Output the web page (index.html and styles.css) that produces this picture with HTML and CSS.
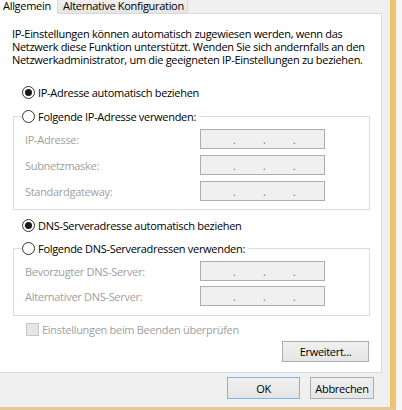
FILE: index.html
```html
<!DOCTYPE html>
<html lang="de">
<head>
<meta charset="utf-8">
<title>Eigenschaften von Internetprotokoll, Version 4 (TCP/IPv4)</title>
<link rel="stylesheet" href="styles.css">
</head>
<body>
<div class="screen">
  <div class="dialog">
    <div class="tabs">
      <div class="tab active">Allgemein</div>
      <div class="tab">Alternative Konfiguration</div>
    </div>
    <div class="panel">
      <p class="intro">IP-Einstellungen können automatisch zugewiesen werden, wenn das<br>Netzwerk diese Funktion unterstützt. Wenden Sie sich andernfalls an den<br>Netzwerkadministrator, um die geeigneten IP-Einstellungen zu beziehen.</p>

      <div class="option first"><span class="radio checked"></span><span>IP-Adresse automatisch beziehen</span></div>
      <div class="group g-ip">
        <div class="option legend"><span class="radio"></span><span>Folgende IP-Adresse verwenden:</span></div>
        <div class="fields">
          <div class="field"><span class="lbl">IP-Adresse:</span><span class="ip"><i>.</i><i>.</i><i>.</i></span></div>
          <div class="field"><span class="lbl">Subnetzmaske:</span><span class="ip"><i>.</i><i>.</i><i>.</i></span></div>
          <div class="field"><span class="lbl">Standardgateway:</span><span class="ip"><i>.</i><i>.</i><i>.</i></span></div>
        </div>
      </div>

      <div class="option second"><span class="radio checked"></span><span>DNS-Serveradresse automatisch beziehen</span></div>
      <div class="group g-dns">
        <div class="option legend"><span class="radio"></span><span>Folgende DNS-Serveradressen verwenden:</span></div>
        <div class="fields dns">
          <div class="field"><span class="lbl">Bevorzugter DNS-Server:</span><span class="ip"><i>.</i><i>.</i><i>.</i></span></div>
          <div class="field"><span class="lbl">Alternativer DNS-Server:</span><span class="ip"><i>.</i><i>.</i><i>.</i></span></div>
        </div>
      </div>

      <div class="check-row"><span class="checkbox"></span><span>Einstellungen beim Beenden überprüfen</span></div>
      <div class="adv-row"><button class="btn adv" type="button">Erweitert...</button></div>
    </div>
    <div class="footer">
      <button class="btn ok" type="button">OK</button>
      <button class="btn cancel" type="button">Abbrechen</button>
    </div>
  </div>
</div>
</body>
</html>
```

FILE: styles.css
```css
* { box-sizing: border-box; }

html, body {
  margin: 0;
  padding: 0;
}

body {
  background: #f7f7f7;
  font-family: "Open Sans", "Noto Sans", sans-serif;
  font-size: 11px;
  letter-spacing: -0.3px;
  color: #000;
  width: 402px;
  height: 410px;
  overflow: hidden;
}

.screen {
  width: 402px;
  height: 410px;
}

.dialog {
  width: 396px;
  height: 410px;
  background: #f0f0f0;
  border-right: 6px solid #efc36b;
  border-bottom: 3px solid #e6c88c;
  display: flex;
  flex-direction: column;
}

/* Tabs */
.tabs {
  display: flex;
  align-items: flex-start;
  height: 13px;
}

.tab {
  height: 13px;
  line-height: 11px;
  padding: 0 3px 0 5px;
  border-right: 1px solid #d9d9d9;
  background: linear-gradient(#f0f0f0, #e5e5e5);
  white-space: nowrap;
}

.tab.active {
  height: 14px;
  width: 58px;
  padding: 0 0 0 3px;
  background: #fff;
  position: relative;
  z-index: 1;
}

/* Panel */
.panel {
  width: 382px;
  height: 360px;
  flex: none;
  background: #fff;
  border-top: 1px solid #d9d9d9;
  border-right: 1px solid #d9d9d9;
  border-bottom: 1px solid #d9d9d9;
  padding: 13px 11px 0 12px;
  display: flex;
  flex-direction: column;
}

.intro {
  margin: 0;
  line-height: 13px;
  white-space: nowrap;
}

.option {
  display: flex;
  align-items: center;
  height: 16px;
  gap: 3px;
  white-space: nowrap;
}

.option.first {
  margin: 18px 0 0 10px;
}

.option.second {
  margin: 7px 0 0 10px;
}

.radio {
  width: 13px;
  height: 13px;
  border: 1px solid #333;
  border-radius: 50%;
  background: #fff;
  display: flex;
  align-items: center;
  justify-content: center;
  flex: none;
}

.radio.checked::after {
  content: "";
  width: 7px;
  height: 7px;
  border-radius: 50%;
  background: #1a1a1a;
}

.group {
  margin-left: 1px;
  border: 1px solid #dcdcdc;
  display: flex;
  flex-direction: column;
}

.g-ip {
  margin-top: 16px;
  padding-bottom: 8px;
}

.g-dns {
  margin-top: 15px;
  padding-bottom: 9px;
}

.option.legend {
  margin: -9px 0 0 8px;
  align-self: flex-start;
  background: #fff;
  padding-right: 3px;
}

.fields {
  margin-top: 5px;
  display: flex;
  flex-direction: column;
  gap: 6px;
}

.fields.dns {
  gap: 5px;
}

.field {
  display: flex;
  align-items: center;
  justify-content: space-between;
  height: 20px;
  padding: 0 44px 0 11px;
}

.lbl {
  color: #a0a0a0;
}

.ip {
  width: 125px;
  height: 20px;
  border: 1px solid #adadad;
  background: #f0f0f0;
  display: flex;
  align-items: flex-end;
  padding: 0 0 3px 32px;
  gap: 29px;
}

.ip i {
  font-style: normal;
  font-size: 10px;
  line-height: 10px;
  width: 1px;
  color: #6a6a6a;
}

.check-row {
  margin: 5px 0 0 14px;
  display: flex;
  align-items: center;
  height: 16px;
  gap: 3px;
  color: #a0a0a0;
}

.checkbox {
  width: 13px;
  height: 13px;
  border: 1px solid #c6c6c6;
  background: #e6e6e6;
  flex: none;
}

.adv-row {
  display: flex;
  justify-content: flex-end;
  margin-top: 4px;
  padding-right: 1px;
}

/* Buttons */
.btn {
  font-family: inherit;
  font-size: 11px;
  letter-spacing: -0.3px;
  color: #000;
  height: 21px;
  padding: 0;
  border: 1px solid #acacac;
  background: linear-gradient(#f0f0f0, #e5e5e5);
  border-radius: 0;
}

.adv {
  width: 87px;
}

.footer {
  display: flex;
  justify-content: flex-end;
  gap: 10px;
  padding: 4px 16px 0 0;
}

.ok {
  width: 73px;
  height: 22px;
  border-color: #7eb4ea;
}

.cancel {
  width: 64px;
  height: 22px;
}
```
